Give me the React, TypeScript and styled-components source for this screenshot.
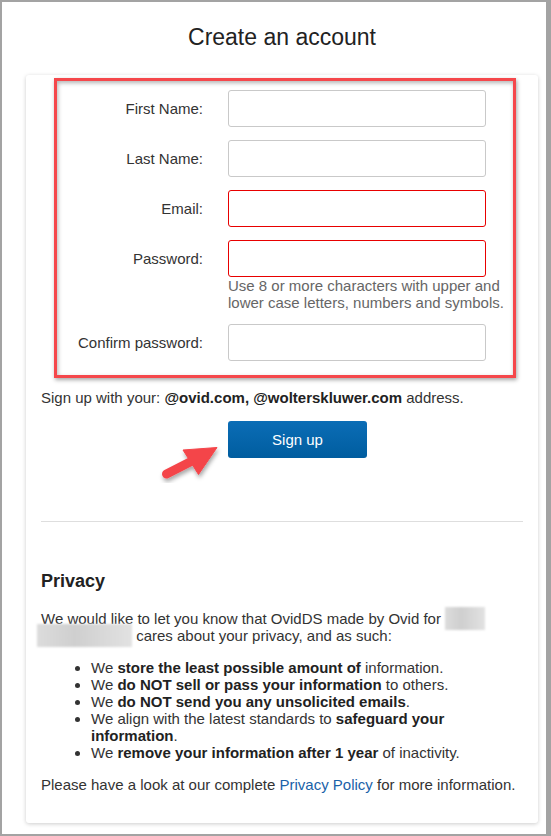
import styled, { createGlobalStyle } from 'styled-components';

const GlobalStyle = createGlobalStyle`
  html, body {
    margin: 0;
    padding: 0;
    background: #fff;
  }
  body {
    font-family: "Liberation Sans", Arial, sans-serif;
    color: #333;
  }
`

const Frame = styled.div`
  box-sizing: border-box;
  width: 551px;
  height: 836px;
  border: 2px solid #a3a3a3;
  border-right-width: 5px;
  padding-left: 24px;
  background: #fff;
`

const Column = styled.div`
  width: 512px;
`

const Title = styled.h1`
  margin: 22px 0 25px;
  font-size: 23px;
  line-height: 26px;
  font-weight: normal;
  color: #222;
  text-align: center;
`

const Card = styled.div`
  background: #fff;
  border-radius: 3px;
  box-shadow: 0 1px 4px rgba(0, 0, 0, 0.2);
  padding: 3px 15px 30px;
  font-size: 15px;
  line-height: 17px;
`

// red annotation frame around the form fields
const Highlight = styled.div`
  margin: 0 7px 0 13px;
  border: 3px solid #f5474b;
  padding: 9px 0 14px;
  box-shadow: 1px 2px 4px rgba(0, 0, 0, 0.35), inset 1px 2px 4px rgba(0, 0, 0, 0.3);
  display: flex;
  flex-direction: column;
  gap: 13px;
`

const FieldRow = styled.div`
  display: flex;
  align-items: flex-start;
  gap: 25px;
`

const Label = styled.label`
  width: 146px;
  text-align: right;
  line-height: 37px;
  color: #333;
`

const Field = styled.div`
  display: flex;
  flex-direction: column;
`

const Input = styled.input<{ $invalid?: boolean }>`
  box-sizing: border-box;
  width: 258px;
  height: 37px;
  margin: 0;
  padding: 6px 10px;
  border: 1px solid ${p => (p.$invalid ? '#e80000' : '#c9c9c9')};
  border-radius: 3px;
  background: #fff;
  font: 15px "Liberation Sans", Arial, sans-serif;
  outline: none;
`

const Hint = styled.div`
  width: 285px;
  color: #666;
`

const SignupNote = styled.p`
  margin: 11px 0 0;
  strong {
    color: #222;
  }
`

const ButtonRow = styled.div`
  position: relative;
  margin-top: 15px;
  padding-left: 187px;
  height: 37px;
`

const SignUpButton = styled.button`
  width: 139px;
  height: 37px;
  border: 0;
  border-radius: 3px;
  background: linear-gradient(#0b6db6, #005d9f);
  color: #fff;
  font: 15px "Liberation Sans", Arial, sans-serif;
  cursor: pointer;
`

const Arrow = styled.svg`
  position: absolute;
  left: 114px;
  top: 19px;
  overflow: visible;
`

const Divider = styled.hr`
  margin: 63px 0 0;
  border: 0;
  border-top: 1px solid #dedede;
`

const PrivacyTitle = styled.h2`
  margin: 49px 0 18px;
  font-size: 18px;
  line-height: 21px;
  font-weight: bold;
  color: #222;
`

const Text = styled.p`
  margin: 0;
`

const Redacted = styled.span<{ $w: number; $shift?: number }>`
  display: inline-block;
  width: ${p => p.$w}px;
  height: 23px;
  margin: -4px 0 -3px ${p => p.$shift ?? 0}px;
  vertical-align: -3px;
  background: linear-gradient(90deg, #dcdcdc, #cfcfcf 40%, #e2e2e2);
  filter: blur(1.2px);
`

const List = styled.ul`
  margin: 15px 0;
  padding-left: 50px;
  strong {
    color: #222;
  }
`

const Link = styled.a`
  color: #1a62a8;
  text-decoration: none;
`

function RedArrow() {
  return (
    <Arrow width="70" height="50" viewBox="0 0 70 50">
      <defs>
        <filter id="arrowShadow" x="-30%" y="-30%" width="160%" height="160%">
          <feDropShadow dx="1" dy="3" stdDeviation="2" floodColor="#000" floodOpacity="0.35" />
        </filter>
      </defs>
      <g filter="url(#arrowShadow)" fill="#f4454a" stroke="#f4454a">
        <line x1="11.5" y1="34" x2="37" y2="21" strokeWidth="9" strokeLinecap="round" />
        <polygon points="62,7.5 28,10 43.5,34.5" strokeWidth="1" strokeLinejoin="round" />
      </g>
    </Arrow>
  )
}

const fields = [
  { label: 'First Name:' },
  { label: 'Last Name:' },
  { label: 'Email:', invalid: true },
  { label: 'Password:', invalid: true, type: 'password', hint: 'Use 8 or more characters with upper and lower case letters, numbers and symbols.' },
  { label: 'Confirm password:', type: 'password' },
]

export default function App() {
  return (
    <>
      <GlobalStyle />
      <Frame>
        <Column>
          <Title>Create an account</Title>
          <Card>
            <Highlight>
              {fields.map(f => (
                <FieldRow key={f.label}>
                  <Label>{f.label}</Label>
                  <Field>
                    <Input type={f.type ?? 'text'} $invalid={f.invalid} />
                    {f.hint && <Hint>{f.hint}</Hint>}
                  </Field>
                </FieldRow>
              ))}
            </Highlight>

            <SignupNote>
              Sign up with your: <strong>@ovid.com, @wolterskluwer.com</strong> address.
            </SignupNote>

            <ButtonRow>
              <RedArrow />
              <SignUpButton>Sign up</SignUpButton>
            </ButtonRow>

            <Divider />

            <PrivacyTitle>Privacy</PrivacyTitle>
            <Text>
              We would like to let you know that OvidDS made by Ovid for <Redacted $w={40} />{' '}
              <Redacted $w={95} $shift={-4} /> cares about your privacy, and as such:
            </Text>
            <List>
              <li>We <strong>store the least possible amount of</strong> information.</li>
              <li>We <strong>do NOT sell or pass your information</strong> to others.</li>
              <li>We <strong>do NOT send you any unsolicited emails</strong>.</li>
              <li>We align with the latest standards to <strong>safeguard your information</strong>.</li>
              <li>We <strong>remove your information after 1 year</strong> of inactivity.</li>
            </List>
            <Text>
              Please have a look at our complete <Link href="#">Privacy Policy</Link> for more information.
            </Text>
          </Card>
        </Column>
      </Frame>
    </>
  )
}
